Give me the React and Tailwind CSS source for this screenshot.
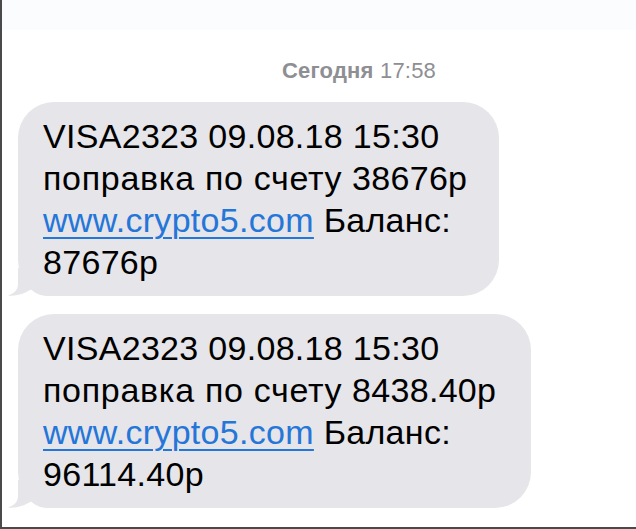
import React from "react";

const messages = [
  { amount: "38676р", balance: "87676р", width: "w-[481px]" },
  { amount: "8438.40р", balance: "96114.40р", width: "w-[513px]" },
];

function Tail() {
  return (
    <svg
      className="absolute left-[-12px] bottom-0"
      width="50"
      height="28"
      viewBox="0 0 50 28"
    >
      <path
        d="M12 0 L12 16 C12 23 7 26 2 27.5 C9 28.5 18 26 25 21.5 C30 26 36 28 42 28 L50 28 L50 0 Z"
        fill="#e5e5ea"
      />
    </svg>
  );
}

function Bubble({ amount, balance, width }) {
  return (
    <div className={`relative ${width} rounded-[36px] bg-[#e5e5ea] pl-[25px] pr-2 py-[13px]`}>
      <div className="relative z-10 whitespace-nowrap text-[34px] leading-[42px] tracking-[0.3px] text-black">
        <div>VISA2323 09.08.18 15:30</div>
        <div>
          <span className="tracking-[0.7px]">поправка по счету</span> {amount}
        </div>
        <div>
          <span className="text-[#2476d8] underline decoration-[1.5px] underline-offset-[5px]">
            www.crypto5.com
          </span>{" "}
          Баланс:
        </div>
        <div>{balance}</div>
      </div>
      <Tail />
    </div>
  );
}

export default function App() {
  return (
    <div
      className="w-[636px] h-[529px] bg-white border-l-2 border-b-2 border-[#4a4a4a] overflow-hidden flex flex-col"
      style={{ fontFamily: '"Liberation Sans", "Noto Sans", sans-serif' }}
    >
      <div className="h-[30px] shrink-0 bg-[#fbfcfd]" />
      <div className="pl-[280px] pt-[29px] text-[22px] leading-[24px] tracking-[0.2px] text-[#8e8e93]">
        <span className="font-bold">Сегодня</span> 17:58
      </div>
      <div className="flex flex-col gap-[18px] pl-[16px] pt-[19px]">
        {messages.map((m, i) => (
          <Bubble key={i} {...m} />
        ))}
      </div>
    </div>
  );
}
